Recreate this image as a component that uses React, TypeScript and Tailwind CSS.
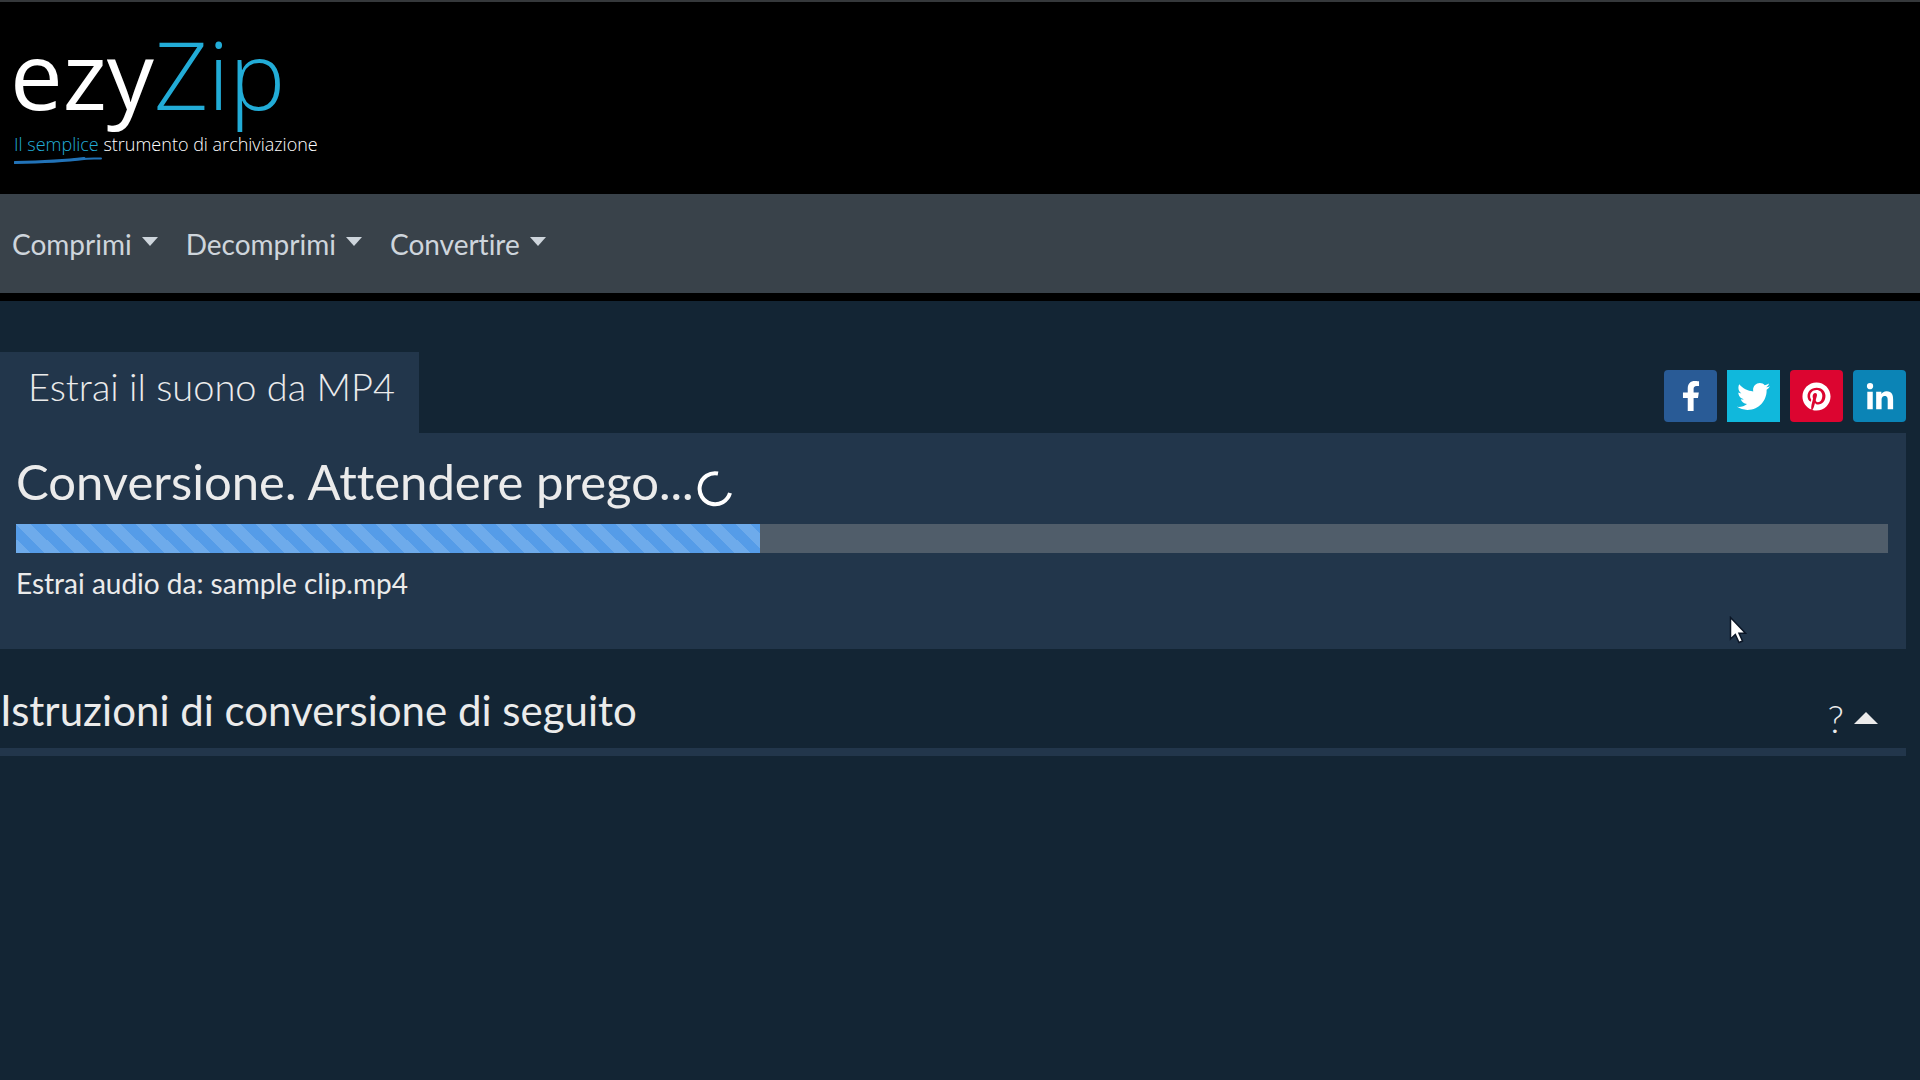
import { FaFacebookF, FaLinkedinIn, FaPinterest, FaTwitter } from 'react-icons/fa';

const menus = ['Comprimi', 'Decomprimi', 'Convertire'];

const shares = [
  { name: 'Facebook', icon: FaFacebookF, size: 30, className: 'rounded-sm bg-[#295b96]' },
  { name: 'Twitter', icon: FaTwitter, size: 33, className: 'bg-[#10b8dc]' },
  { name: 'Pinterest', icon: FaPinterest, size: 29, className: 'rounded-sm bg-[#dc0530]' },
  { name: 'LinkedIn', icon: FaLinkedinIn, size: 30, className: 'rounded-sm bg-[#0b84b6] pt-1' },
];

function Logo() {
  return (
    <a href="#" className="relative block w-fit font-['Open_Sans',sans-serif]">
      <span className="block text-[94px] leading-24 text-white">
        ezy<span className="font-light text-[#22acd7]">Zip</span>
      </span>
      <span className="mt-1.5 block pb-1 pl-1 text-lg leading-8 font-light text-white">
        <span className="text-[#22acd7]">Il semplice</span> strumento di archiviazione
      </span>
      <svg
        className="absolute bottom-0 left-1"
        width="88"
        height="8"
        viewBox="0 0 88 8"
        fill="none"
        stroke="#2273b8"
        strokeLinecap="round"
      >
        <path d="M1 6.5C30 6 50 5 70 2.5" strokeWidth="3" />
        <path d="M58 4C68 2 78 2.5 87 2.5" strokeWidth="2" />
      </svg>
    </a>
  );
}

function MouseCursor() {
  return (
    <svg
      className="absolute top-[183px] right-[159px]"
      width="18"
      height="28"
      viewBox="0 0 18 28"
      fill="white"
      stroke="#0b1626"
      strokeWidth="1.5"
    >
      <path d="M1.5 1.5V23L6.3 18.5L10 26.5L13.5 25L10 17.2H16.5Z" />
    </svg>
  );
}

export default function App() {
  const percent = 39.74;

  return (
    <div className="min-h-screen bg-[#132534] font-['Lato',sans-serif] text-[#ebebeb] [font-variant-ligatures:none]">
      <header className="border-t-2 border-[#35383b] bg-black px-2.5 pt-6 pb-[30px]">
        <Logo />
      </header>

      <nav className="flex h-[107px] items-center gap-7 border-b-8 border-black bg-[#39424a] px-3">
        {menus.map((label) => (
          <button key={label} type="button" className="flex items-center gap-2.5 text-[28px] leading-10 text-[#ced5dc]">
            {label}
            <svg className="mb-1" width="16" height="9" viewBox="0 0 16 9" fill="currentColor" aria-hidden="true">
              <path d="M0 0H16L8 9Z" />
            </svg>
          </button>
        ))}
      </nav>

      <main className="mr-3.5 pt-[51px]">
        <div className="flex items-end justify-between">
          <h1 className="bg-[#22364b] pt-2.5 pr-6 pb-[23px] pl-7 text-[38px] leading-12 font-light">
            Estrai il suono da MP4
          </h1>
          <div className="mb-[11px] flex gap-2.5">
            {shares.map(({ name, icon: Icon, size, className }) => (
              <a
                key={name}
                href="#"
                aria-label={name}
                className={`flex h-[52px] w-[53px] items-center justify-center text-white ${className}`}
              >
                <Icon size={size} />
              </a>
            ))}
          </div>
        </div>

        {/* Conversion progress */}
        <section className="relative bg-[#22364b] pt-5 pr-[18px] pb-[46px] pl-4">
          <h2 className="mb-[15px] flex items-center gap-[3px] text-[49px] leading-14">
            Conversione. Attendere prego...
            <svg className="mt-4" width="36" height="36" viewBox="0 0 36 36" fill="none" stroke="white" strokeWidth="4">
              <path d="M21 2.5A15.500 15.500 0 1 0 33 22" />
            </svg>
          </h2>
          <div
            role="progressbar"
            aria-label="Conversione"
            aria-valuenow={percent}
            className="h-[29px] bg-[#505d6a]"
          >
            <div
              className="h-full bg-[#559ce8] bg-[linear-gradient(45deg,rgba(255,255,255,.15)_25%,transparent_25%,transparent_50%,rgba(255,255,255,.15)_50%,rgba(255,255,255,.15)_75%,transparent_75%)] bg-size-[30px_30px]"
              style={{ width: `${percent}%` }}
            />
          </div>
          <p className="mt-2.5 text-[28px] leading-10">Estrai audio da: sample clip.mp4</p>
          <MouseCursor />
        </section>

        {/* Instructions */}
        <section className="mt-[33px] flex items-end justify-between border-b-8 border-[#22364b] pb-2.5">
          <h2 className="text-[42px] leading-14">Istruzioni di conversione di seguito</h2>
          <button type="button" className="mr-7 flex items-center gap-2.5 text-[38px] leading-10 font-light">
            ?
            <svg width="24" height="12" viewBox="0 0 24 12" fill="currentColor" aria-hidden="true">
              <path d="M0 12H24L12 0Z" />
            </svg>
          </button>
        </section>
      </main>
    </div>
  );
}
